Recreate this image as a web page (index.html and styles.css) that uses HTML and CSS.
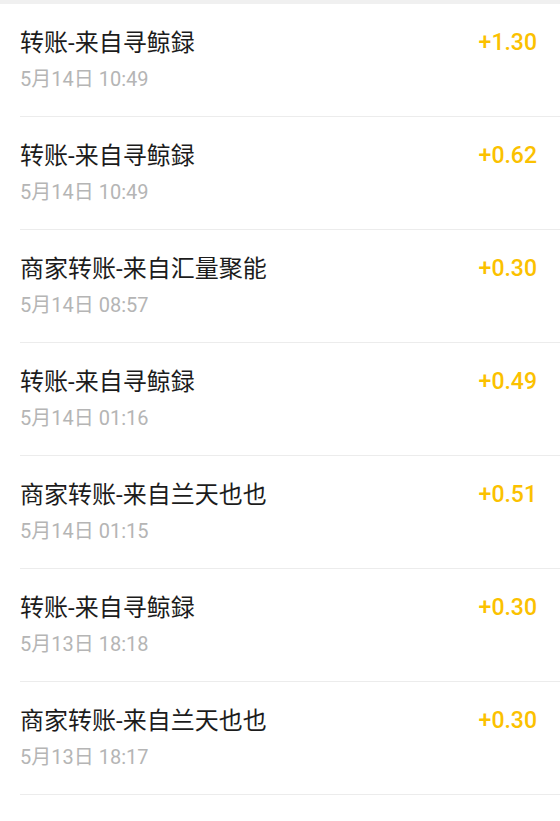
FILE: index.html
```html
<!DOCTYPE html>
<html lang="zh-CN">
<head>
<meta charset="utf-8">
<title>账单</title>
<link rel="stylesheet" href="styles.css">
</head>
<body>
<div class="strip"></div>
<ul class="list">
  <li class="row"><div class="info"><div class="title">转账-来自寻鲸録</div><div class="date">5月14日 10:49</div></div><div class="amount">+1.30</div></li>
  <li class="row"><div class="info"><div class="title">转账-来自寻鲸録</div><div class="date">5月14日 10:49</div></div><div class="amount">+0.62</div></li>
  <li class="row"><div class="info"><div class="title">商家转账-来自汇量聚能</div><div class="date">5月14日 08:57</div></div><div class="amount">+0.30</div></li>
  <li class="row"><div class="info"><div class="title">转账-来自寻鲸録</div><div class="date">5月14日 01:16</div></div><div class="amount">+0.49</div></li>
  <li class="row"><div class="info"><div class="title">商家转账-来自兰天也也</div><div class="date">5月14日 01:15</div></div><div class="amount">+0.51</div></li>
  <li class="row"><div class="info"><div class="title">转账-来自寻鲸録</div><div class="date">5月13日 18:18</div></div><div class="amount">+0.30</div></li>
  <li class="row"><div class="info"><div class="title">商家转账-来自兰天也也</div><div class="date">5月13日 18:17</div></div><div class="amount">+0.30</div></li>
  <li class="row"><div class="info"><div class="title">转账-来自寻鲸録</div><div class="date">5月13日 18:16</div></div><div class="amount">+0.30</div></li>
</ul>
</body>
</html>
```
FILE: styles.css
```css
html, body {
  margin: 0;
  padding: 0;
  background: #ffffff;
}
body {
  font-family: Roboto, "Noto Sans CJK SC", sans-serif;
  overflow: hidden;
  height: 821px;
}
.strip {
  height: 4px;
  background: #f0f0f0;
}
.list {
  list-style: none;
  margin: 0;
  padding: 0;
}
.row {
  display: flex;
  justify-content: space-between;
  align-items: flex-start;
  box-sizing: border-box;
  height: 113px;
  margin-left: 20px;
  padding: 23px 23px 0 0;
  border-bottom: 1px solid #ececec;
}
.title {
  font-size: 24px;
  line-height: 32px;
  color: #1c1c1c;
}
.date {
  margin-top: 7px;
  font-size: 20px;
  line-height: 26px;
  color: #b5b5b5;
}
.amount {
  font-size: 23px;
  line-height: 32px;
  font-weight: 500;
  color: #fbc100;
}
```
